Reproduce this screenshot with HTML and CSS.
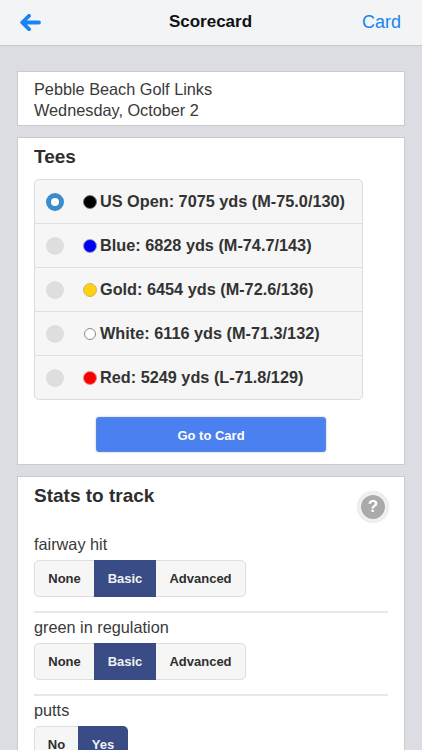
FILE: index.html
```html
<!DOCTYPE html>
<html lang="en">
<head>
<meta charset="utf-8">
<title>Scorecard</title>
<link rel="stylesheet" href="styles.css">
</head>
<body>
<header class="nav">
  <a class="nav-back" aria-label="Back">
    <svg width="21" height="17" viewBox="0 0 21 17"><path d="M9 1.8 2.2 8.5 9 15.2 M3 8.5h16" fill="none" stroke="#1a84f0" stroke-width="3.8" stroke-linecap="round" stroke-linejoin="round"/></svg>
  </a>
  <h1 class="nav-title">Scorecard</h1>
  <a class="nav-action">Card</a>
</header>
<main class="content">
  <section class="card card-info">
    <div>Pebble Beach Golf Links</div>
    <div>Wednesday, October 2</div>
  </section>
  <section class="card card-tees">
    <h2 class="card-title">Tees</h2>
    <ul class="tees">
      <li class="tee"><span class="radio radio-on"></span><span class="dot dot-black"></span><span>US Open: 7075 yds (M-75.0/130)</span></li>
      <li class="tee"><span class="radio"></span><span class="dot dot-blue"></span><span>Blue: 6828 yds (M-74.7/143)</span></li>
      <li class="tee"><span class="radio"></span><span class="dot dot-gold"></span><span>Gold: 6454 yds (M-72.6/136)</span></li>
      <li class="tee"><span class="radio"></span><span class="dot dot-white"></span><span>White: 6116 yds (M-71.3/132)</span></li>
      <li class="tee"><span class="radio"></span><span class="dot dot-red"></span><span>Red: 5249 yds (L-71.8/129)</span></li>
    </ul>
    <div class="go-wrap"><button class="go">Go to Card</button></div>
  </section>
  <section class="card card-stats">
    <div class="stats-head">
      <h2 class="card-title">Stats to track</h2>
      <span class="help">?</span>
    </div>
    <div class="stat">
      <div class="stat-label">fairway hit</div>
      <div class="seg"><span class="seg-item seg-none">None</span><span class="seg-item seg-basic seg-on">Basic</span><span class="seg-item seg-adv">Advanced</span></div>
    </div>
    <div class="stat">
      <div class="stat-label">green in regulation</div>
      <div class="seg"><span class="seg-item seg-none">None</span><span class="seg-item seg-basic seg-on">Basic</span><span class="seg-item seg-adv">Advanced</span></div>
    </div>
    <div class="stat">
      <div class="stat-label">putts</div>
      <div class="seg"><span class="seg-item seg-no">No</span><span class="seg-item seg-yes seg-on">Yes</span></div>
    </div>
  </section>
</main>
</body>
</html>
```
FILE: styles.css
```css
* { box-sizing: border-box; }
html, body { margin: 0; height: 750px; overflow: hidden; }
body {
  background: #dcdde2;
  font-family: "Liberation Sans", Arial, sans-serif;
  color: #333;
}
.nav {
  height: 46px;
  background: #f2f4f6;
  border-bottom: 1px solid #c6c8ca;
  display: grid;
  grid-template-columns: 1fr auto 1fr;
  align-items: center;
  padding: 0 21px 1px 20px;
}
.nav-back { display: flex; align-items: center; }
.nav-title { margin: 0; font-size: 17px; font-weight: 700; color: #111; }
.nav-action { justify-self: end; font-size: 18px; color: #1a84f0; }
.content {
  padding: 25px 17px 0;
  display: flex;
  flex-direction: column;
  gap: 11px;
}
.card {
  background: #fff;
  border: 2px solid #c9cbcf;
  border-width: 1px 1.5px 1.5px 1px;
  padding: 0 16px;
}
.card-info { height: 55px; padding-top: 7px; font-size: 16.27px; line-height: 20.5px; color: #3a3a3a; }
.card-tees { height: 328px; padding-top: 8px; }
.card-stats { flex: 1; height: 300px; padding-top: 8px; }
.card-title { margin: 0; font-size: 19px; line-height: 22px; font-weight: 700; color: #2e2e2e; }
.tees {
  list-style: none;
  margin: 11px 0 0;
  padding: 0;
  width: 329px;
  background: #f6f6f6;
  border: 1px solid #dcdcdc;
  border-radius: 5px;
}
.tee {
  height: 44.1px;
  display: flex;
  align-items: center;
  padding-left: 11px;
  font-size: 16.27px;
  font-weight: 700;
  color: #333;
  border-top: 1px solid #dedede;
}
.tee:first-child { border-top: 0; height: 43px; }
.radio { width: 18px; height: 18px; border-radius: 50%; background: #dedede; margin-right: 19px; flex: none; }
.radio-on { background: #fff; border: 5px solid #3a8ccb; }
.dot { width: 14px; height: 14px; border-radius: 50%; margin-right: 3px; flex: none; border: 1px solid #bbb; }
.dot-black { background: #000; border-color: #777; }
.dot-blue { background: #0000f0; border-color: #99c; }
.dot-gold { background: #ffd110; border-color: #c9b873; }
.dot-white { background: #fff; border-color: #888; width: 12px; height: 12px; margin: 0 4px 0 1px; }
.dot-red { background: #f70000; border-color: #e88; }
.go-wrap { display: flex; justify-content: center; margin-top: 16.6px; }
.go {
  width: 230px;
  height: 35px;
  padding: 2px 0 0;
  background: #4a80f0;
  color: #fff;
  border: 1px solid #5a86dc;
  border-radius: 3px;
  box-shadow: 0 0 2px #9db4dc;
  font: 700 13px "Liberation Sans", Arial, sans-serif;
}
.stats-head { display: flex; justify-content: space-between; height: 49px; }
.help {
  width: 30px;
  height: 30px;
  margin-top: 7px;
  border-radius: 50%;
  background: #aaa;
  border: 3px solid #f1f1f1;
  box-shadow: 0 0 2px #bbb;
  color: #fff;
  font-size: 17px;
  font-weight: 700;
  display: flex;
  align-items: center;
  justify-content: center;
}
.stat { padding-bottom: 14px; margin-bottom: 4px; border-bottom: 2px solid #e8e8e8; }
.stat:last-child { border-bottom: 0; }
.stat-label { font-size: 16.27px; line-height: 20px; color: #3a3a3a; margin-bottom: 6px; }
.seg {
  display: inline-flex;
  vertical-align: top;
  height: 37px;
  background: #f6f6f6;
  border: 1px solid #dedede;
  border-radius: 5px;
}
.seg-item {
  display: flex;
  align-items: center;
  justify-content: center;
  font-size: 13px;
  font-weight: 700;
  color: #2e2e2e;
}
.seg-on { background: #394c86; color: #f2f2f2; margin: -1px 0; }
.seg-none { width: 59px; }
.seg-basic { width: 62px; }
.seg-adv { width: 89px; }
.seg-no { width: 43px; }
.seg-yes { width: 50px; border-radius: 0 5px 5px 0; margin-right: -1px; }
```
